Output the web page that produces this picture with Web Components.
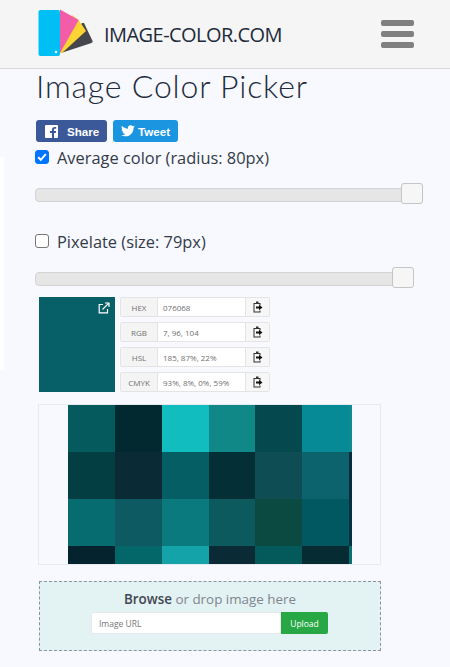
<!DOCTYPE html>
<html>
<head>
<meta charset="utf-8">
<title>Image Color Picker</title>
<style>
  html, body { margin: 0; padding: 0; background: #f8f8ff; }
  body {
    font-family: "Open Sans", "Noto Sans", sans-serif;
    color: #333;
    height: 667px;
    overflow: hidden;
    background: linear-gradient(#fff, #fff) 0 157px / 4px 213px no-repeat #f8f8ff;
  }
</style>
</head>
<body>
<ic-header></ic-header>
<ic-page>
  <ic-title>Image Color Picker</ic-title>
  <ic-share></ic-share>
  <ic-option checked style="--track: 388px; --after: 26px">Average color (radius: 80px)</ic-option>
  <ic-option style="--track: 379px; --after: 8px">Pixelate (size: 79px)</ic-option>
  <ic-result></ic-result>
  <ic-pixels></ic-pixels>
  <ic-drop></ic-drop>
</ic-page>

<script>
const headerTemplate = document.createElement("template");
headerTemplate.innerHTML = `
  <style>
    :host {
      display: flex;
      align-items: center;
      justify-content: space-between;
      height: 68px;
      padding: 0 36px 0 38px;
      background: #f5f5f5;
      border-bottom: 1px solid #d8d8d8;
    }
    .brand { display: flex; align-items: center; gap: 11px; }
    .brand span { font: 20px "Open Sans", sans-serif; color: #212b3a; letter-spacing: -0.55px; }
    .burger { display: flex; flex-direction: column; gap: 5px; width: 33px; }
    .burger i { display: block; height: 6px; border-radius: 2px; background: #808080; }
    svg { display: block; overflow: visible; }
  </style>
  <div class="brand">
    <svg width="55" height="48" viewBox="38 10 55 48">
      <path d="M61 53 L82 23 L84 23 L92.800 41.500 L91.500 43 Z" fill="#45474c"/>
      <path d="M60 53 L72 15 L78.700 20 L86 31 L62 53 Z" fill="#fcd535"/>
      <path d="M60 9.500 L78.700 20 L60 53 Z" fill="#f35ca8"/>
      <rect x="38.500" y="10" width="21.500" height="46" rx="2" fill="#00bff5"/>
      <circle cx="56" cy="52" r="1.300" fill="#e8f8ff"/>
    </svg>
    <span>IMAGE-COLOR.COM</span>
  </div>
  <div class="burger"><i></i><i></i><i></i></div>
`;
class IcHeader extends HTMLElement {
  constructor() {
    super();
    this.attachShadow({ mode: "open" }).append(headerTemplate.content.cloneNode(true));
  }
}
customElements.define("ic-header", IcHeader);

const pageTemplate = document.createElement("template");
pageTemplate.innerHTML = `
  <style>
    :host { display: block; padding: 0 0 0 35px; }
  </style>
  <slot></slot>
`;
class IcPage extends HTMLElement {
  constructor() {
    super();
    this.attachShadow({ mode: "open" }).append(pageTemplate.content.cloneNode(true));
  }
}
customElements.define("ic-page", IcPage);

const titleTemplate = document.createElement("template");
titleTemplate.innerHTML = `
  <style>
    :host {
      display: block;
      margin: 0 0 17px 1px;
      font: 300 32px/34px Lato, sans-serif;
      color: #212b3a;
      letter-spacing: 0.82px;
    }
  </style>
  <slot></slot>
`;
class IcTitle extends HTMLElement {
  constructor() {
    super();
    this.attachShadow({ mode: "open" }).append(titleTemplate.content.cloneNode(true));
  }
}
customElements.define("ic-title", IcTitle);

const shareTemplate = document.createElement("template");
shareTemplate.innerHTML = `
  <style>
    :host { display: flex; gap: 6px; margin: 0 0 5px 1px; }
    a {
      display: flex;
      align-items: center;
      height: 22px;
      border-radius: 3px;
      color: #fff;
      font: bold 11.600px "Liberation Sans", sans-serif;
    }
    .fb { width: 71px; background: #3b5998; padding-left: 9px; gap: 9px; box-sizing: border-box; }
    .tw { width: 65px; background: #1b95e0; padding-left: 8px; gap: 3px; box-sizing: border-box; }
    svg { display: block; }
  </style>
  <a class="fb">
    <svg width="13" height="13" viewBox="0 0 13 13"><path fill="#fff" fill-rule="evenodd" d="M1 0h11a1 1 0 0 1 1 1v11a1 1 0 0 1-1 1H9V8h1.800l.3-2H9V4.800c0-.6.2-1 1-1h1.200V2c-.3 0-.9-.1-1.600-.1C8 1.900 7 2.900 7 4.600V6H5v2h2v5H1a1 1 0 0 1-1-1V1a1 1 0 0 1 1-1z"/></svg>
    <span>Share</span>
  </a>
  <a class="tw">
    <svg width="14" height="12" viewBox="0 0 24 20"><path fill="#fff" d="M24 2.400c-.9.4-1.800.7-2.800.8 1-.6 1.800-1.600 2.200-2.700-1 .6-2 1-3.100 1.200C19.300.7 18 0 16.600 0c-2.700 0-4.900 2.200-4.900 4.900 0 .4 0 .8.100 1.100C7.700 5.800 4.100 3.900 1.700.9c-.4.700-.7 1.600-.7 2.500 0 1.700.9 3.200 2.200 4.100-.8 0-1.600-.2-2.200-.6v.1c0 2.400 1.700 4.400 3.900 4.800-.4.100-.8.200-1.300.2-.3 0-.6 0-.9-.1.600 2 2.400 3.400 4.600 3.400-1.700 1.300-3.800 2.100-6.100 2.100-.4 0-.8 0-1.200-.1C2.200 18.300 4.800 19.100 7.500 19.100c9.100 0 14-7.500 14-14v-.6c1-.7 1.800-1.600 2.500-2.100z"/></svg>
    <span>Tweet</span>
  </a>
`;
class IcShare extends HTMLElement {
  constructor() {
    super();
    this.attachShadow({ mode: "open" }).append(shareTemplate.content.cloneNode(true));
  }
}
customElements.define("ic-share", IcShare);

const optionTemplate = document.createElement("template");
optionTemplate.innerHTML = `
  <style>
    :host { display: block; }
    label {
      display: flex;
      align-items: center;
      height: 20px;
      gap: 8px;
      font: 16.400px/20px "Open Sans", sans-serif;
      color: #333c47;
    }
    label span:last-child { padding-top: 2px; }
    .box {
      box-sizing: border-box;
      width: 14px;
      height: 14px;
      border-radius: 3px;
      border: 1px solid #767676;
      background: #fff;
    }
    .box.on { background: #0075ff; border-color: #0075ff; }
    .box svg { display: block; }
    .range {
      display: flex;
      align-items: center;
      width: var(--track);
      margin: 16px 0 var(--after);
      height: 22px;
      position: relative;
    }
    .track {
      flex: 1;
      height: 14px;
      margin-top: 2px;
      box-sizing: border-box;
      background: #e6e6e6;
      border: 1px solid #d3d3d3;
      border-radius: 4px;
    }
    .thumb {
      position: absolute;
      right: 0;
      top: 0;
      box-sizing: border-box;
      width: 22px;
      height: 21px;
      background: #f6f6f6;
      border: 1px solid #c5c5c5;
      border-radius: 3px;
    }
  </style>
  <label><span class="box"></span><span><slot></slot></span></label>
  <div class="range"><div class="track"></div><div class="thumb"></div></div>
`;
class IcOption extends HTMLElement {
  constructor() {
    super();
    this.attachShadow({ mode: "open" }).append(optionTemplate.content.cloneNode(true));
  }
  connectedCallback() {
    if (this.hasAttribute("checked")) {
      const box = this.shadowRoot.querySelector(".box");
      box.classList.add("on");
      box.innerHTML = `<svg width="12" height="12" viewBox="0 0 12 12"><path d="M2.200 6.200 4.800 8.800 9.800 3.200" fill="none" stroke="#fff" stroke-width="2"/></svg>`;
    }
  }
}
customElements.define("ic-option", IcOption);

const rowTemplate = document.createElement("template");
rowTemplate.innerHTML = `
  <style>
    :host {
      display: flex;
      height: 20px;
      box-sizing: border-box;
      border: 1px solid #e4e4e4;
      border-radius: 2px;
      background: #fff;
      font: 8px "Open Sans", sans-serif;
      color: #707070;
    }
    .name {
      box-sizing: border-box;
      width: 37px;
      display: flex;
      align-items: center;
      justify-content: center;
      background: #f4f4f4;
      border-right: 1px solid #e4e4e4;
    }
    .value { flex: 1; display: flex; align-items: center; padding-left: 5px; }
    .copy {
      width: 24px;
      display: flex;
      align-items: center;
      justify-content: center;
      background: #f7f7f7;
      border-left: 1px solid #e4e4e4;
      box-sizing: border-box;
    }
    svg { display: block; }
  </style>
  <span class="name"></span>
  <span class="value"><slot></slot></span>
  <span class="copy">
    <svg width="10" height="12" viewBox="0 0 10 12">
      <path fill="#333" d="M3 .5h2.500V2H7.500v2.500H6.500V3h-5v7.500h5V9.500h1V11.500H.5V2H3z"/>
      <path fill="#111" d="M3 5.500h3V3.800L9.500 6.500 6 9.200V7.500H3z"/>
    </svg>
  </span>
`;
class IcRow extends HTMLElement {
  constructor() {
    super();
    this.attachShadow({ mode: "open" }).append(rowTemplate.content.cloneNode(true));
  }
  connectedCallback() {
    this.shadowRoot.querySelector(".name").textContent = this.getAttribute("name");
  }
}
customElements.define("ic-row", IcRow);

const resultTemplate = document.createElement("template");
resultTemplate.innerHTML = `
  <style>
    :host { display: flex; gap: 5px; margin: 0 0 12px 4px; }
    .swatch {
      width: 76px;
      height: 95px;
      background: #076068;
      display: flex;
      justify-content: flex-end;
      box-sizing: border-box;
      padding: 5px 5px 0 0;
    }
    .rows { display: flex; flex-direction: column; gap: 5px; width: 150px; }
    svg { display: block; }
  </style>
  <div class="swatch">
    <svg width="12" height="12" viewBox="0 0 12 12" fill="none" stroke="#fff" stroke-width="1.200">
      <path d="M5 2.500H1.200v8.300h8.300V7"/><path d="M4.500 7.500 10.800 1.200M7 1h4v4"/>
    </svg>
  </div>
  <div class="rows">
    <ic-row name="HEX">076068</ic-row>
    <ic-row name="RGB">7, 96, 104</ic-row>
    <ic-row name="HSL">185, 87%, 22%</ic-row>
    <ic-row name="CMYK">93%, 8%, 0%, 59%</ic-row>
  </div>
`;
class IcResult extends HTMLElement {
  constructor() {
    super();
    this.attachShadow({ mode: "open" }).append(resultTemplate.content.cloneNode(true));
  }
}
customElements.define("ic-result", IcResult);

const pixelRows = [
  ["#045a5c", "#02292f", "#12bdbf", "#108888", "#05484d", "#058a96", "#118a90"],
  ["#033f42", "#0a2a36", "#045e64", "#052f37", "#0e4d53", "#0c636e", "#0a2a3d"],
  ["#076c70", "#0e5a63", "#0b7a7f", "#0d5a5e", "#0a4a40", "#025860", "#063040"],
  ["#05232e", "#036668", "#13a3a8", "#0a2a36", "#045a5a", "#072b33", "#0a7070"],
];
const pixelsTemplate = document.createElement("template");
pixelsTemplate.innerHTML = `
  <style>
    :host {
      display: flex;
      box-sizing: border-box;
      width: 343px;
      height: 161px;
      margin-left: 3px;
      padding: 0 28px 0 29px;
      border: 1px solid #e6e9ee;
      background: #f8f8ff;
    }
    .grid {
      flex: 1;
      display: grid;
      grid-template-columns: 47px 47px 47px 46px 46.500px 47px 1fr;
      grid-template-rows: 47px 47px 46.500px 1fr;
    }
  </style>
  <div class="grid"></div>
`;
class IcPixels extends HTMLElement {
  constructor() {
    super();
    this.attachShadow({ mode: "open" }).append(pixelsTemplate.content.cloneNode(true));
  }
  connectedCallback() {
    const grid = this.shadowRoot.querySelector(".grid");
    pixelRows.flat().forEach(color => {
      const cell = document.createElement("div");
      cell.style.background = color;
      grid.append(cell);
    });
  }
}
customElements.define("ic-pixels", IcPixels);

const dropTemplate = document.createElement("template");
dropTemplate.innerHTML = `
  <style>
    :host {
      display: flex;
      flex-direction: column;
      align-items: center;
      box-sizing: border-box;
      width: 342px;
      height: 70px;
      margin: 16px 0 0 4px;
      padding-top: 7px;
      background: #e3f2f3;
      border: 1px dashed #8a959c;
    }
    p { margin: 0 0 3px; font: 13.400px/20px "Open Sans", sans-serif; color: #80868c; }
    b { font-weight: 600; color: #3f4752; }
    .form { display: flex; width: 237px; height: 22px; margin-right: 1px; }
    .url {
      flex: 1;
      box-sizing: border-box;
      display: flex;
      align-items: center;
      padding-left: 7px;
      background: #fff;
      border: 1px solid #e8eaec;
      border-radius: 2px 0 0 2px;
      font: 8.500px "Open Sans", sans-serif;
      color: #777;
    }
    .go {
      width: 47px;
      display: flex;
      align-items: center;
      justify-content: center;
      background: #28a745;
      color: #fff;
      border-radius: 0 2px 2px 0;
      font: 8.500px "Open Sans", sans-serif;
    }
  </style>
  <p><b>Browse</b> or drop image here</p>
  <div class="form"><div class="url">Image URL</div><div class="go">Upload</div></div>
`;
class IcDrop extends HTMLElement {
  constructor() {
    super();
    this.attachShadow({ mode: "open" }).append(dropTemplate.content.cloneNode(true));
  }
}
customElements.define("ic-drop", IcDrop);
</script>
</body>
</html>
